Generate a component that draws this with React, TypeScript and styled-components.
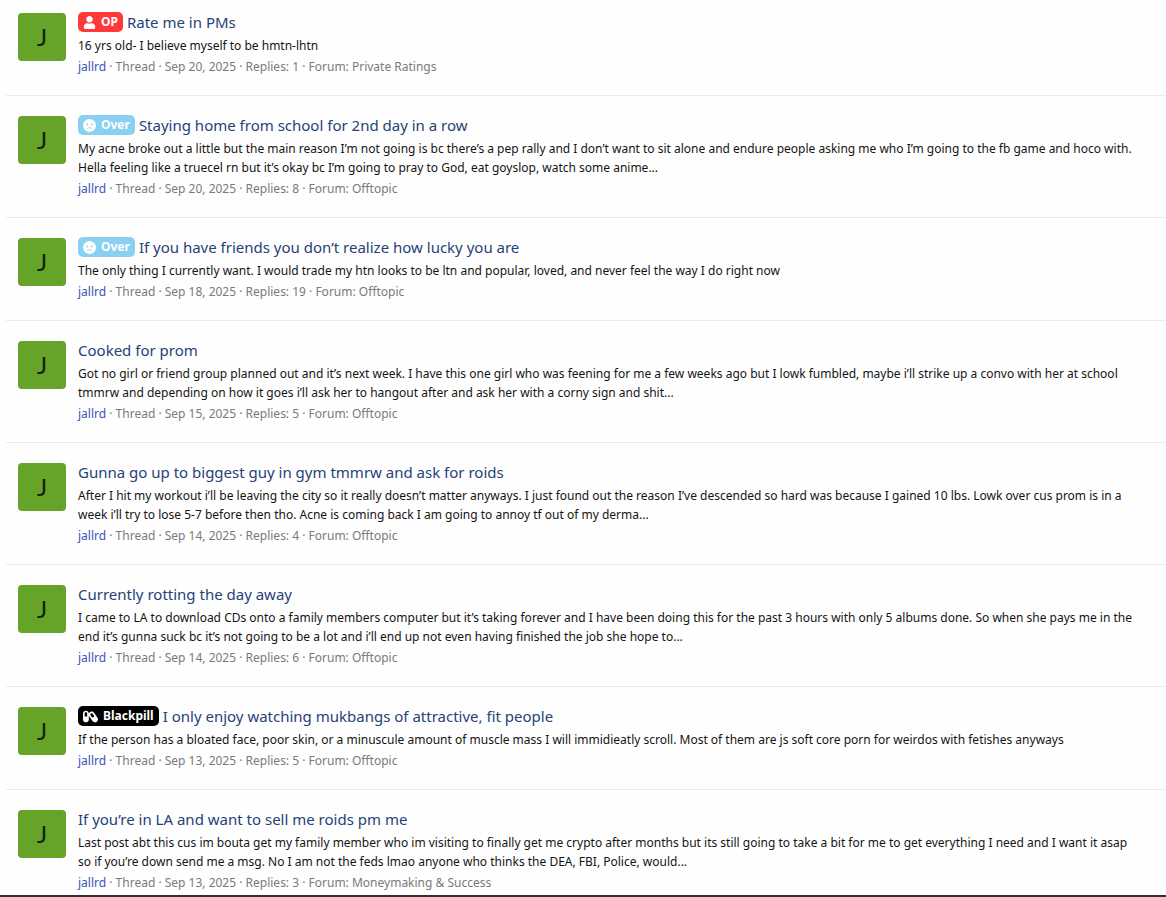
import React from 'react';
import styled, { createGlobalStyle } from 'styled-components';
import { FaUser, FaCapsules } from 'react-icons/fa';

const GlobalStyle = createGlobalStyle`
  *, *::before, *::after { box-sizing: border-box; }
  body {
    margin: 0;
    background: #fefefe;
    color: #141414;
    font-family: "Segoe UI", "Noto Sans", "Open Sans", sans-serif;
    font-size: 12px;
  }
`;

const Page = styled.main`
  padding-left: 6px;
  border-bottom: 2px solid #303030;
`;

const Results = styled.ol`
  list-style: none;
  margin: 0;
  padding: 0 0 3px;
`;

const Row = styled.li`
  display: flex;
  gap: 12px;
  padding: 20px 4px 19px 12px;
  border-top: 1px solid #ebebeb;

  &:first-child {
    padding-top: 13px;
    border-top: 0;
  }

  &:last-child {
    padding-bottom: 0;
  }
`;

const Avatar = styled.a`
  display: flex;
  flex: none;
  align-items: center;
  justify-content: center;
  width: 48px;
  height: 48px;
  border-radius: 4px;
  background: #66a329;
  color: #141f08;
  font-family: "Segoe UI", Lato, sans-serif;
  font-size: 24px;
  line-height: 48px;
  text-decoration: none;
`;

const Content = styled.div`
  flex: 1;
  min-width: 0;
`;

const Title = styled.h3`
  display: flex;
  align-items: center;
  gap: 4px;
  height: 18px;
  margin: 0 0 5px;
  font-size: 15px;
  font-weight: 400;
  line-height: 18px;
`;

const TitleLink = styled.a`
  color: #264278;
  text-decoration: none;
`;

const Label = styled.span<{ $color: string }>`
  display: inline-flex;
  align-items: center;
  gap: 5px;
  height: 20px;
  padding: 0 5px;
  border-radius: 5px;
  background: ${(p) => p.$color};
  color: #fff;
  font-size: 12px;
  font-weight: 700;
`;

const Snippet = styled.p`
  margin: 0 0 3px;
  line-height: 19px;
`;

const Meta = styled.div`
  color: #7a7a7a;
  line-height: 18px;
`;

const MetaLink = styled.a<{ $user?: boolean }>`
  color: ${(p) => (p.$user ? '#3d52b8' : 'inherit')};
  text-decoration: none;
`;

interface IconProps {
  size: number;
}

function FrownIcon({ size }: IconProps) {
  return (
    <svg width={size} height={size} viewBox="0 0 26 26" aria-hidden="true">
      <circle cx="13" cy="13" r="13" fill="#fff" />
      <circle cx="8.5" cy="11" r="1.8" fill="#87ceeb" />
      <circle cx="17.5" cy="11" r="1.8" fill="#87ceeb" />
      <path d="M9 18.5Q13 15.5 17 18.5" fill="none" stroke="#87ceeb" strokeWidth="1.8" strokeLinecap="round" />
    </svg>
  );
}

type LabelKind = 'OP' | 'Over' | 'Blackpill';

const labels: Record<LabelKind, { color: string; icon: React.ComponentType<IconProps>; size: number }> = {
  OP: { color: '#ff3838', icon: FaUser, size: 13 },
  Over: { color: '#8ad0f0', icon: FrownIcon, size: 13 },
  Blackpill: { color: '#000000', icon: FaCapsules, size: 15 },
};

interface Thread {
  label?: LabelKind;
  title: string;
  lines: string[];
  date: string;
  replies: number;
  forum: string;
}

const threads: Thread[] = [
  {
    label: 'OP',
    title: 'Rate me in PMs',
    lines: ['16 yrs old- I believe myself to be hmtn-lhtn'],
    date: 'Sep 20, 2025',
    replies: 1,
    forum: 'Private Ratings',
  },
  {
    label: 'Over',
    title: 'Staying home from school for 2nd day in a row',
    lines: [
      'My acne broke out a little but the main reason I’m not going is bc there’s a pep rally and I don’t want to sit alone and endure people asking me who I’m going to the fb game and hoco with.',
      'Hella feeling like a truecel rn but it’s okay bc I’m going to pray to God, eat goyslop, watch some anime...',
    ],
    date: 'Sep 20, 2025',
    replies: 8,
    forum: 'Offtopic',
  },
  {
    label: 'Over',
    title: 'If you have friends you don’t realize how lucky you are',
    lines: ['The only thing I currently want. I would trade my htn looks to be ltn and popular, loved, and never feel the way I do right now'],
    date: 'Sep 18, 2025',
    replies: 19,
    forum: 'Offtopic',
  },
  {
    title: 'Cooked for prom',
    lines: [
      'Got no girl or friend group planned out and it’s next week. I have this one girl who was feening for me a few weeks ago but I lowk fumbled, maybe i’ll strike up a convo with her at school',
      'tmmrw and depending on how it goes i’ll ask her to hangout after and ask her with a corny sign and shit...',
    ],
    date: 'Sep 15, 2025',
    replies: 5,
    forum: 'Offtopic',
  },
  {
    title: 'Gunna go up to biggest guy in gym tmmrw and ask for roids',
    lines: [
      'After I hit my workout i’ll be leaving the city so it really doesn’t matter anyways. I just found out the reason I’ve descended so hard was because I gained 10 lbs. Lowk over cus prom is in a',
      'week i’ll try to lose 5-7 before then tho. Acne is coming back I am going to annoy tf out of my derma...',
    ],
    date: 'Sep 14, 2025',
    replies: 4,
    forum: 'Offtopic',
  },
  {
    title: 'Currently rotting the day away',
    lines: [
      'I came to LA to download CDs onto a family members computer but it’s taking forever and I have been doing this for the past 3 hours with only 5 albums done. So when she pays me in the',
      'end it’s gunna suck bc it’s not going to be a lot and i’ll end up not even having finished the job she hope to...',
    ],
    date: 'Sep 14, 2025',
    replies: 6,
    forum: 'Offtopic',
  },
  {
    label: 'Blackpill',
    title: 'I only enjoy watching mukbangs of attractive, fit people',
    lines: ['If the person has a bloated face, poor skin, or a minuscule amount of muscle mass I will immidieatly scroll. Most of them are js soft core porn for weirdos with fetishes anyways'],
    date: 'Sep 13, 2025',
    replies: 5,
    forum: 'Offtopic',
  },
  {
    title: 'If you’re in LA and want to sell me roids pm me',
    lines: [
      'Last post abt this cus im bouta get my family member who im visiting to finally get me crypto after months but its still going to take a bit for me to get everything I need and I want it asap',
      'so if you’re down send me a msg. No I am not the feds lmao anyone who thinks the DEA, FBI, Police, would...',
    ],
    date: 'Sep 13, 2025',
    replies: 3,
    forum: 'Moneymaking & Success',
  },
];

function ThreadLabel({ kind }: { kind: LabelKind }) {
  const { color, icon: Icon, size } = labels[kind];
  return (
    <Label $color={color}>
      <Icon size={size} />
      {kind}
    </Label>
  );
}

function ThreadRow({ thread }: { thread: Thread }) {
  return (
    <Row>
      <Avatar href="#jallrd">J</Avatar>
      <Content>
        <Title>
          {thread.label && <ThreadLabel kind={thread.label} />}
          <TitleLink href="#thread">{thread.title}</TitleLink>
        </Title>
        <Snippet>
          {thread.lines.map((line, i) => (
            <React.Fragment key={line}>
              {i > 0 && <br />}
              {line}
            </React.Fragment>
          ))}
        </Snippet>
        <Meta>
          <MetaLink $user href="#jallrd">jallrd</MetaLink>
          {` · Thread · ${thread.date} · Replies: ${thread.replies} · Forum: `}
          <MetaLink href="#forum">{thread.forum}</MetaLink>
        </Meta>
      </Content>
    </Row>
  );
}

export default function App() {
  return (
    <>
      <GlobalStyle />
      <Page>
        <Results>
          {threads.map((thread) => (
            <ThreadRow key={thread.title} thread={thread} />
          ))}
        </Results>
      </Page>
    </>
  );
}
